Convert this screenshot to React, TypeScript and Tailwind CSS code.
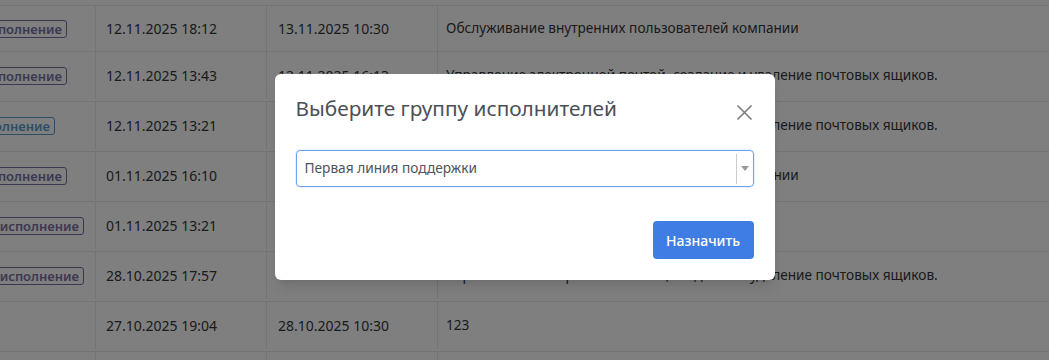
import React from "react";

type Row = {
  badge: string | null;
  badgeColor: "purple" | "blue";
  pr: string;
  d1: string;
  d2: string;
  text: string;
  first?: boolean;
};

const rows: Row[] = [
  { badge: "Принято в исполнение", badgeColor: "purple", pr: "pr-[28px]", d1: "12.11.2025 18:12", d2: "13.11.2025 10:30", text: "Обслуживание внутренних пользователей компании", first: true },
  { badge: "Принято в исполнение", badgeColor: "purple", pr: "pr-[28px]", d1: "12.11.2025 13:43", d2: "12.11.2025 16:13", text: "Управление электронной почтой, создание и удаление почтовых ящиков." },
  { badge: "Выполнение", badgeColor: "blue", pr: "pr-[40px]", d1: "12.11.2025 13:21", d2: "12.11.2025 16:00", text: "Управление электронной почтой, создание и удаление почтовых ящиков." },
  { badge: "Принято в исполнение", badgeColor: "purple", pr: "pr-[28px]", d1: "01.11.2025 16:10", d2: "01.11.2025 18:00", text: "Обслуживание внутренних пользователей компании" },
  { badge: "Передано в исполнение", badgeColor: "purple", pr: "pr-[11px]", d1: "01.11.2025 13:21", d2: "01.11.2025 15:00", text: "Настройка оборудования" },
  { badge: "Передано в исполнение", badgeColor: "purple", pr: "pr-[11px]", d1: "28.10.2025 17:57", d2: "", text: "Управление электронной почтой, создание и удаление почтовых ящиков." },
  { badge: null, badgeColor: "purple", pr: "pr-[11px]", d1: "27.10.2025 19:04", d2: "28.10.2025 10:30", text: "123" },
  { badge: null, badgeColor: "purple", pr: "pr-[11px]", d1: "", d2: "", text: "" },
];

export default function App() {
  return (
    <div
      className="relative h-[360px] w-[1049px] overflow-hidden bg-white text-[14px] text-[#363636]"
      style={{ fontFamily: '"Noto Sans", "Open Sans", sans-serif' }}
    >
      <div className="h-[5px]" />
      {rows.map((r, i) => (
        <div
          key={i}
          className={`flex border-t border-[#e9e9e9] ${r.first ? "h-[46px]" : "h-[50px] pb-[2px]"}`}
        >
          <div className={`flex w-[95px] shrink-0 items-center justify-end overflow-visible ${r.pr}`}>
            {r.badge && (
              <span
                className={`shrink-0 whitespace-nowrap rounded-[3px] border px-[4px] text-[13px] font-semibold leading-[16px] ${
                  r.badgeColor === "blue"
                    ? "border-[#5c9ccc] text-[#5c9ccc]"
                    : "border-[#78709f] text-[#78709f]"
                }`}
              >
                {r.badge}
              </span>
            )}
          </div>
          <div className="flex w-[171px] shrink-0 items-center border-l border-[#e9e9e9] pl-[10px]">
            {r.d1}
          </div>
          <div className="flex w-[171px] shrink-0 items-center border-l border-[#e9e9e9] pl-[11px]">
            {r.d2}
          </div>
          <div className="flex flex-1 items-center whitespace-nowrap border-l border-[#e9e9e9] pl-[8px] text-[13.65px]">
            {r.text}
          </div>
        </div>
      ))}

      <div className="absolute inset-0 bg-black/50" />

      <div className="absolute inset-0 flex justify-center pt-[74px]">
        <div className="h-[206px] w-[500px] rounded-[6px] bg-white px-[21px] pt-[22px] shadow-lg">
          <div className="flex items-start justify-between">
            <h2 className="text-[20.8px] leading-[24px] text-[#4b5057]">
              Выберите группу исполнителей
            </h2>
            <button className="mr-[1px] mt-[8px] text-[#7b7b7b]">
              <svg width="17" height="17" viewBox="0 0 17 17">
                <path d="M1.5 1.5 L15.5 15.5 M15.5 1.5 L1.5 15.5" stroke="currentColor" strokeWidth="1.6" fill="none" />
              </svg>
            </button>
          </div>
          <div className="mt-[29px] flex h-[37px] items-center rounded-[4px] border border-[#6fa3f0] bg-white shadow-[0_0_0_1px_rgba(111,163,240,0.15)]">
            <span className="flex-1 pl-[8px] text-[13.7px] text-[#4f5459]">Первая линия поддержки</span>
            <div className="h-[30px] w-px bg-[#cccccc]" />
            <div className="flex w-[16px] items-center justify-center">
              <svg width="8" height="5" viewBox="0 0 8 5">
                <path d="M0 0 L8 0 L4 5 Z" fill="#9a9a9a" />
              </svg>
            </div>
          </div>
          <div className="mt-[34px] flex justify-end">
            <button className="h-[38px] w-[101px] rounded-[4px] bg-[#3f7de4] text-[14px] font-medium text-white">
              Назначить
            </button>
          </div>
        </div>
      </div>
    </div>
  );
}
